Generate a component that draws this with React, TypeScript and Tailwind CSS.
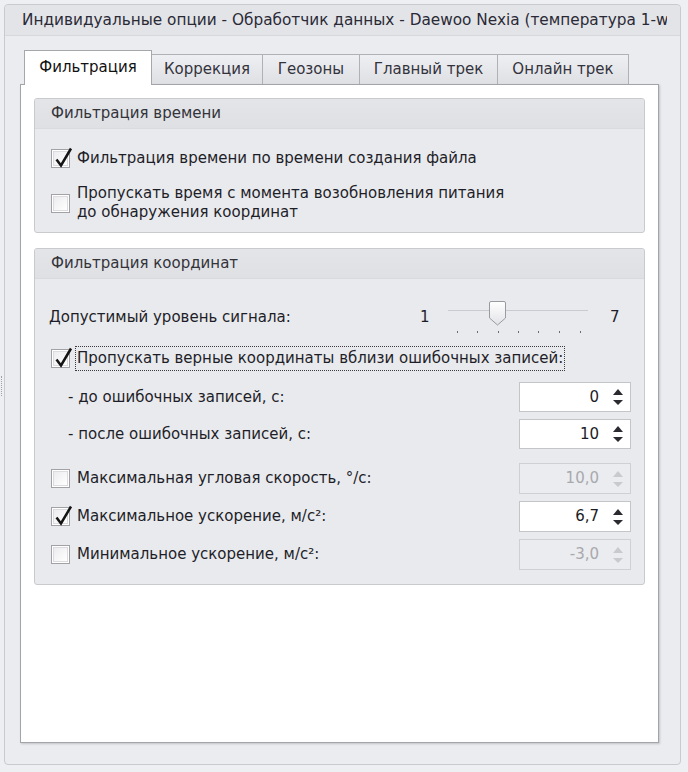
import React from 'react';

// Вкладки окна индивидуальных опций
const TABS = [
  { label: 'Коррекция', w: 'w-[111px]' },
  { label: 'Геозоны', w: 'w-[97px]' },
  { label: 'Главный трек', w: 'w-[138px]' },
  { label: 'Онлайн трек', w: 'w-[131px]' },
];

const CheckBox: React.FC<{ checked?: boolean }> = ({ checked }) => (
  <div className="relative w-[19px] h-[19px] shrink-0 border border-[#a2a2a6] bg-white">
    <div className="absolute inset-[1px] border border-[#dcdce0] bg-gradient-to-br from-[#ececef] to-white" />
    {checked && (
      <svg className="absolute left-[1px] top-[-4px]" width="22" height="24" viewBox="0 0 22 24">
        <path d="M3.5 13.5 L8 19.5 L18 2.5" fill="none" stroke="#141414" strokeWidth="2.5" strokeLinejoin="miter" />
      </svg>
    )}
  </div>
);

const SpinBox: React.FC<{ value: string; disabled?: boolean; className?: string }> = ({ value, disabled, className }) => {
  const arrow = disabled ? '#c9cacd' : '#2a2a30';
  return (
    <div
      className={`flex items-center w-[112px] h-[30px] border ${
        disabled ? 'border-[#cfd0d3] bg-[#ebecf0] text-[#a8a9ad]' : 'border-[#c4c5c9] bg-white text-[#1c1c24]'
      } ${className ?? ''}`}
    >
      <span className="flex-1 text-right pr-[12px]">{value}</span>
      <svg width="14" height="22" viewBox="0 0 14 22" className="shrink-0">
        <path d="M7 3 L12 9 L2 9 Z" fill={arrow} />
        <path d="M2 14 L12 14 L7 19 Z" fill={arrow} />
      </svg>
      <div className="w-[5px]" />
    </div>
  );
};

const Slider: React.FC = () => {
  const ticks = [12, 32, 53, 73, 93, 114, 135];
  return (
    <svg width="150" height="40" viewBox="0 0 150 40" className="shrink-0">
      <defs>
        <linearGradient id="trk" x1="0" x2="1" y1="0" y2="0">
          <stop offset="0" stopColor="#e6e2ee" />
          <stop offset="1" stopColor="#a886d6" />
        </linearGradient>
        <linearGradient id="thumb" x1="0" x2="0" y1="0" y2="1">
          <stop offset="0" stopColor="#ffffff" />
          <stop offset="1" stopColor="#e2e3e7" />
        </linearGradient>
      </defs>
      <line x1="3" y1="13.5" x2="143" y2="13.5" stroke="#cacbd0" strokeWidth="1" />
      <line x1="3" y1="13.5" x2="46" y2="13.5" stroke="url(#trk)" strokeWidth="1.5" />
      <path d="M44.5 6 Q44.5 4.5 46 4.5 L59 4.5 Q60.5 4.5 60.5 6 L60.5 21 L52.5 28 L44.5 21 Z" fill="url(#thumb)" stroke="#9a9ba0" strokeWidth="1" />
      {ticks.map((x) => (
        <rect key={x} x={x} y={34} width={1} height={2} fill="#6b6b72" />
      ))}
    </svg>
  );
};

const GroupBox: React.FC<{ title: string; className?: string; children: React.ReactNode }> = ({ title, className, children }) => (
  <div className={`border border-[#c9cace] rounded-[3px] bg-[#e9eaee] ${className ?? ''}`}>
    <div className="h-[30px] flex items-center pl-[16px] bg-gradient-to-b from-[#e4e5e9] to-[#dfe0e4] border-b border-[#d9dade] text-[#33333a] rounded-t-[3px]">
      {title}
    </div>
    {children}
  </div>
);

const App: React.FC = () => {
  return (
    <div className="w-[688px] h-[772px] flex bg-[#eeeff2] font-['DejaVu_Sans',sans-serif] text-[15px] leading-[19px] text-[#1e1e28] overflow-hidden">
      {/* splitter grip */}
      <div className="w-[4px] flex items-center justify-center">
        <div className="w-[3px] h-[20px] border-l border-dotted border-[#a0a0a6]" />
      </div>

      <div className="mt-[4px] w-[677px] h-[761px] border border-[#c9cace] rounded-[4px] bg-[#ebecf0] flex flex-col">
        {/* title bar: текст обрезается у правого края, как в оригинале */}
        <div className="h-[31px] shrink-0 flex items-center pl-[17px] bg-[#e3e4e8] border-b border-[#d7d8dc] rounded-t-[4px] text-[#2a2a36] text-[15.3px]">
          <span className="w-[645px] whitespace-nowrap overflow-hidden">
            Индивидуальные опции - Обработчик данных - Daewoo Nexia (температура 1-wire)
          </span>
        </div>

        {/* tabs */}
        <div className="flex items-end pl-[19px] pt-[14px]">
          <div className="relative z-10 w-[128px] h-[35px] -mb-px bg-white border-l border-t border-r border-[#a6a7ab] flex items-center justify-center pb-[2px] text-[#111]">
            Фильтрация
          </div>
          {TABS.map((t) => (
            <div
              key={t.label}
              className={`${t.w} h-[30px] border-t border-r border-[#b0b1b5] bg-gradient-to-b from-[#eeeff2] to-[#dfe0e4] flex items-center justify-center text-[#33333d]`}
            >
              {t.label}
            </div>
          ))}
        </div>

        {/* tab page */}
        <div className="ml-[15px] w-[639px] h-[659px] bg-white border border-[#a3a4a9] shadow-[1px_1px_2px_rgba(0,0,0,0.18)] flex flex-col">
          <GroupBox title="Фильтрация времени" className="mt-[13px] ml-[13px] w-[611px]">
            <div className="pt-[19px] pb-[10px] pl-[16px] flex flex-col">
              <div className="h-[20px] flex items-center gap-[7px]">
                <CheckBox checked />
                <span>Фильтрация времени по времени создания файла</span>
              </div>
              <div className="mt-[16px] h-[38px] flex items-center gap-[7px]">
                <CheckBox />
                <span>
                  Пропускать время с момента возобновления питания
                  <br />
                  до обнаружения координат
                </span>
              </div>
            </div>
          </GroupBox>

          <GroupBox title="Фильтрация координат" className="mt-[15px] ml-[13px] w-[611px]">
            <div className="pt-[18px] pb-[14px] flex flex-col">
              {/* signal level */}
              <div className="h-[40px] flex items-center pl-[14px]">
                <span className="w-[371px]">Допустимый уровень сигнала:</span>
                <span className="w-[25px]">1</span>
                <Slider />
                <span className="ml-[15px]">7</span>
              </div>

              <div className="mt-[8px] h-[26px] flex items-center pl-[16px] gap-[5px]">
                <CheckBox checked />
                <span className="border border-dotted border-[#3a3a40] px-[1px] leading-[23px]">
                  Пропускать верные координаты вблизи ошибочных записей:
                </span>
              </div>

              <div className="mt-[11px] h-[30px] flex items-center justify-between pl-[33px] pr-[13px]">
                <span>- до ошибочных записей, с:</span>
                <SpinBox value="0" />
              </div>
              <div className="mt-[7px] h-[30px] flex items-center justify-between pl-[33px] pr-[13px]">
                <span>- после ошибочных записей, с:</span>
                <SpinBox value="10" />
              </div>

              <div className="mt-[14px] h-[31px] flex items-center pl-[16px] pr-[13px]">
                <CheckBox />
                <span className="ml-[7px] flex-1">Максимальная угловая скорость, °/с:</span>
                <SpinBox value="10,0" disabled className="h-[31px]" />
              </div>
              <div className="mt-[7px] h-[31px] flex items-center pl-[16px] pr-[13px]">
                <CheckBox checked />
                <span className="ml-[7px] flex-1">Максимальное ускорение, м/с²:</span>
                <SpinBox value="6,7" className="h-[31px]" />
              </div>
              <div className="mt-[7px] h-[31px] flex items-center pl-[16px] pr-[13px]">
                <CheckBox />
                <span className="ml-[7px] flex-1">Минимальное ускорение, м/с²:</span>
                <SpinBox value="-3,0" disabled className="h-[31px]" />
              </div>
            </div>
          </GroupBox>
        </div>
      </div>
    </div>
  );
};

export default App;
